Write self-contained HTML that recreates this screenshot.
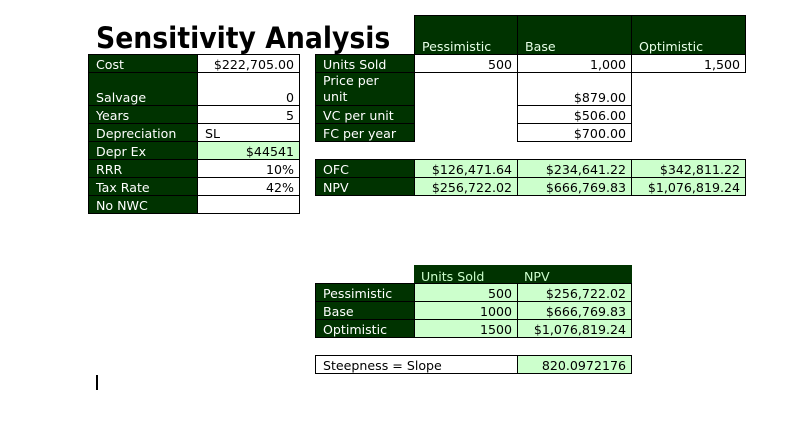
<!DOCTYPE html>
<html><head><style>
body{margin:0;width:808px;height:421px;background:#fff;position:relative;overflow:hidden;font-family:"DejaVu Sans","Liberation Sans",sans-serif;font-size:12.6px;}
.c{position:absolute;box-sizing:border-box;border:1px solid #000;display:flex;align-items:flex-end;padding:0 5px 0 7px;white-space:nowrap;line-height:15px;}
.d{background:#003300;color:#fff;}
.h{background:#003300;color:#e8ffe8;}
.g{background:#ccffcc;}
.r{justify-content:flex-end;}
.t{position:absolute;left:96px;top:21px;font-weight:bold;font-size:29px;transform:scaleX(0.92);transform-origin:left top;line-height:34px;}
</style></head><body>
<div class="t">Sensitivity Analysis</div>
<div class="c d" style="left:88px;top:54px;width:110px;height:19px">Cost</div>
<div class="c r" style="left:197px;top:54px;width:103px;height:19px">$222,705.00</div>
<div class="c d" style="left:88px;top:72px;width:110px;height:34px">Salvage</div>
<div class="c r" style="left:197px;top:72px;width:103px;height:34px">0</div>
<div class="c d" style="left:88px;top:105px;width:110px;height:19px">Years</div>
<div class="c r" style="left:197px;top:105px;width:103px;height:19px">5</div>
<div class="c d" style="left:88px;top:123px;width:110px;height:19px">Depreciation</div>
<div class="c" style="left:197px;top:123px;width:103px;height:19px">SL</div>
<div class="c d" style="left:88px;top:141px;width:110px;height:19px">Depr Ex</div>
<div class="c r g" style="left:197px;top:141px;width:103px;height:19px">$44541</div>
<div class="c d" style="left:88px;top:159px;width:110px;height:19px">RRR</div>
<div class="c r" style="left:197px;top:159px;width:103px;height:19px">10%</div>
<div class="c d" style="left:88px;top:177px;width:110px;height:19px">Tax Rate</div>
<div class="c r" style="left:197px;top:177px;width:103px;height:19px">42%</div>
<div class="c d" style="left:88px;top:195px;width:110px;height:19px">No NWC</div>
<div class="c" style="left:197px;top:195px;width:103px;height:19px"></div>
<div class="c h" style="left:414px;top:15px;width:104px;height:40px">Pessimistic</div>
<div class="c h" style="left:517px;top:15px;width:115px;height:40px">Base</div>
<div class="c h" style="left:631px;top:15px;width:115px;height:40px">Optimistic</div>
<div class="c d" style="left:315px;top:54px;width:100px;height:19px">Units Sold</div>
<div class="c r" style="left:414px;top:54px;width:104px;height:19px">500</div>
<div class="c r" style="left:517px;top:54px;width:115px;height:19px">1,000</div>
<div class="c r" style="left:631px;top:54px;width:115px;height:19px">1,500</div>
<div class="c d" style="left:315px;top:72px;width:100px;height:34px;line-height:16px">Price per<br>unit</div>
<div class="c r" style="left:517px;top:72px;width:115px;height:34px">$879.00</div>
<div class="c d" style="left:315px;top:105px;width:100px;height:19px">VC per unit</div>
<div class="c r" style="left:517px;top:105px;width:115px;height:19px">$506.00</div>
<div class="c d" style="left:315px;top:123px;width:100px;height:19px">FC per year</div>
<div class="c r" style="left:517px;top:123px;width:115px;height:19px">$700.00</div>
<div class="c d" style="left:315px;top:159px;width:100px;height:19px">OFC</div>
<div class="c r g" style="left:414px;top:159px;width:104px;height:19px">$126,471.64</div>
<div class="c r g" style="left:517px;top:159px;width:115px;height:19px">$234,641.22</div>
<div class="c r g" style="left:631px;top:159px;width:115px;height:19px">$342,811.22</div>
<div class="c d" style="left:315px;top:177px;width:100px;height:19px">NPV</div>
<div class="c r g" style="left:414px;top:177px;width:104px;height:19px">$256,722.02</div>
<div class="c r g" style="left:517px;top:177px;width:115px;height:19px">$666,769.83</div>
<div class="c r g" style="left:631px;top:177px;width:115px;height:19px">$1,076,819.24</div>
<div class="c" style="left:414px;top:265px;width:218px;height:19px;background:#003300;border-color:#003300"></div>
<div class="c" style="left:414px;top:265px;width:104px;height:19px;background:transparent;border:none;color:#ccffcc">Units Sold</div>
<div class="c" style="left:517px;top:265px;width:115px;height:19px;background:transparent;border:none;color:#ccffcc">NPV</div>
<div class="c d" style="left:315px;top:283px;width:100px;height:19px">Pessimistic</div>
<div class="c r g" style="left:414px;top:283px;width:104px;height:19px">500</div>
<div class="c r g" style="left:517px;top:283px;width:115px;height:19px">$256,722.02</div>
<div class="c d" style="left:315px;top:301px;width:100px;height:19px">Base</div>
<div class="c r g" style="left:414px;top:301px;width:104px;height:19px">1000</div>
<div class="c r g" style="left:517px;top:301px;width:115px;height:19px">$666,769.83</div>
<div class="c d" style="left:315px;top:319px;width:100px;height:19px">Optimistic</div>
<div class="c r g" style="left:414px;top:319px;width:104px;height:19px">1500</div>
<div class="c r g" style="left:517px;top:319px;width:115px;height:19px">$1,076,819.24</div>
<div class="c" style="left:315px;top:355px;width:203px;height:19px">Steepness = Slope</div>
<div class="c r g" style="left:517px;top:355px;width:115px;height:19px">820.0972176</div>
<div style="position:absolute;left:96px;top:375px;width:2px;height:15px;background:#000"></div>
</body></html>
